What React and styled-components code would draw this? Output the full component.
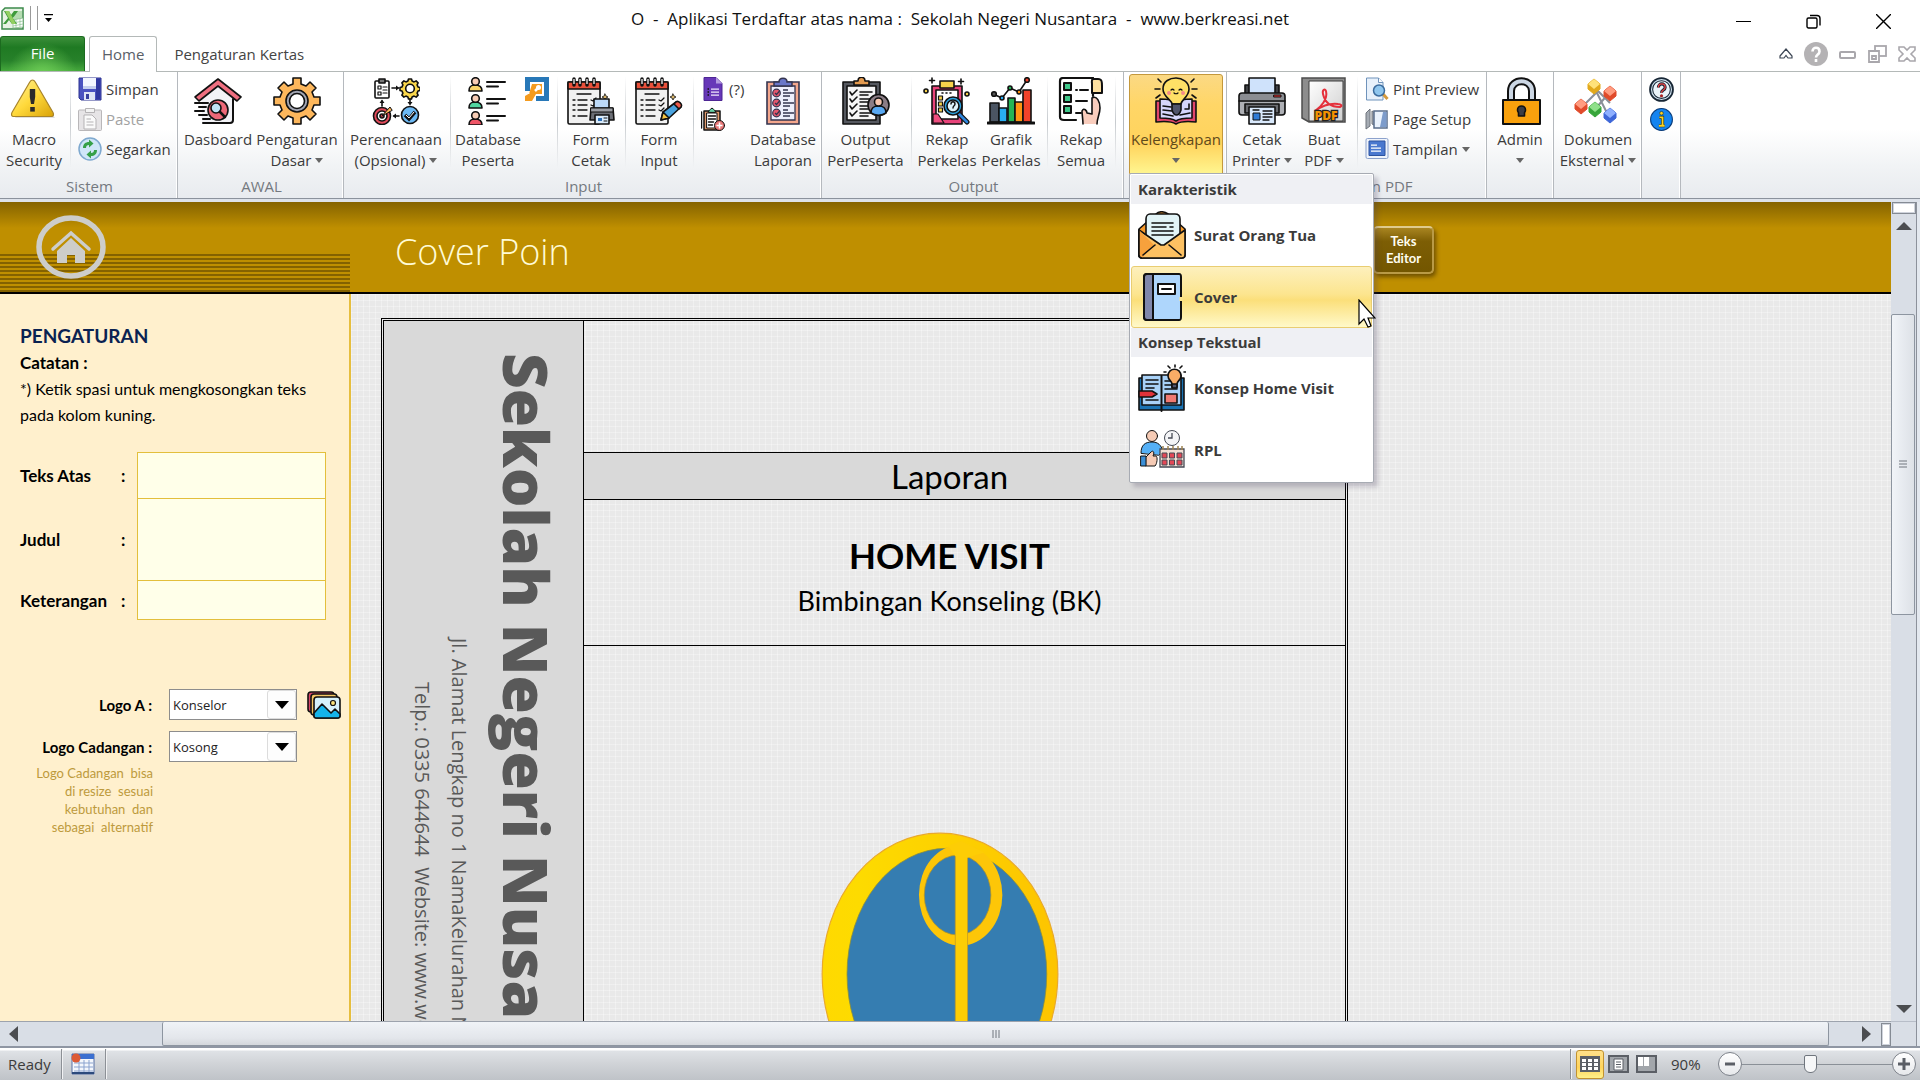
import styled, { createGlobalStyle, css } from 'styled-components'

const GlobalStyle = createGlobalStyle`
  * {
    box-sizing: border-box;
  }

  body {
    margin: 0;
    overflow: hidden;
    background: #fff;
    font-family: 'Open Sans', 'Noto Sans', sans-serif;
    font-size: 15px;
    color: #3b3b3b;
  }

  button, input, select, textarea {
    font: inherit;
    color: inherit;
  }

  svg {
    display: block;
    flex: none;
  }
`

const Window = styled.div`
  display: flex;
  flex-direction: column;
  height: 100vh;
  min-width: 1700px;
`

/* ---------- title bar ---------- */

const TitleBar = styled.header`
  display: grid;
  grid-template-columns: 1fr auto 1fr;
  align-items: center;
  height: 36px;
`

const QuickAccess = styled.div`
  display: flex;
  align-items: center;
  gap: 6px;
  height: 30px;
  padding-left: 1px;
`

const QuickLine = styled.span`
  width: 1px;
  height: 24px;
  background: #9a9a9a;
`

const Title = styled.h1`
  margin: 0;
  font-size: 17px;
  font-weight: 400;
  color: #111;
  white-space: pre;
`

const WindowButtons = styled.div`
  display: flex;
  justify-content: flex-end;
  height: 36px;
  padding-right: 2px;
`

const PlainButton = styled.button`
  display: flex;
  align-items: center;
  justify-content: center;
  padding: 0;
  border: 0;
  background: none;
`

const WindowButton = styled(PlainButton)`
  width: 70px;
  padding-top: 6px;
`

/* ---------- tabs ---------- */

const TabBar = styled.nav`
  display: flex;
  align-items: flex-end;
  height: 36px;
  border-bottom: 1px solid #b4b9b8;
`

const FileTab = styled.button`
  width: 85px;
  height: 35px;
  padding: 0 0 2px;
  border: 1px solid #1c6b1f;
  border-bottom: 0;
  border-radius: 3px 3px 0 0;
  color: #fff;
  background: radial-gradient(ellipse at 50% 115%, #6fce57 0%, rgba(75, 170, 60, 0) 60%),
    linear-gradient(#3c8f3a, #1f7a23 30%, #27812a 70%, #45a83c);
`

const Tab = styled.button`
  height: 36px;
  margin: 0 0 -1px 4px;
  padding: 0 12px 2px;
  border: 1px solid ${(p) => (p.$active ? '#b4b9b8' : 'transparent')};
  border-bottom: 0;
  border-radius: 3px 3px 0 0;
  color: ${(p) => (p.$active ? '#5a6068' : '#444')};
  background: ${(p) => (p.$active ? '#fff' : 'none')};
`

const TabTools = styled.div`
  display: flex;
  align-items: center;
  gap: 11px;
  height: 35px;
  margin-left: auto;
  padding-right: 4px;
`

/* ---------- ribbon ---------- */

const Ribbon = styled.div`
  display: flex;
  height: 127px;
  border-bottom: 1px solid #8b929c;
  background: linear-gradient(#fff 0%, #fff 45%, #f1f3f5 75%, #e8ebef 100%);
`

const Group = styled.section`
  display: flex;
  flex-direction: column;
  width: ${(p) => p.$w}px;
  padding-left: 2px;
  border-right: 1px solid #b5b9be;
  box-shadow: inset -1px 0 #fff;
`

const GroupBody = styled.div`
  display: flex;
  height: 104px;
  padding-left: ${(p) => p.$pad || 0}px;
`

const GroupName = styled.h2`
  margin: 0;
  font-size: 15px;
  line-height: 21px;
  font-weight: 400;
  text-align: center;
  color: #74797f;
`

const BigButton = styled.button`
  display: flex;
  flex-direction: column;
  align-items: center;
  width: ${(p) => p.$w}px;
  height: 100px;
  margin-top: 2px;
  padding: 2px 0 0;
  border: 1px solid transparent;
  border-radius: 3px;
  background: none;
  line-height: 21px;
  white-space: nowrap;

  ${(p) =>
    p.$open &&
    css`
      border-color: #c4983c;
      border-radius: 3px 3px 0 0;
      color: #5f4a1b;
      background: linear-gradient(#fbd984 0%, #ffd667 30%, #ffd35c 70%, #fff58f 100%);
    `}
`

const BigLabel = styled.span`
  display: flex;
  align-items: center;
  gap: 4px;
  height: 21px;

  &:first-of-type {
    margin-top: 4px;
  }
`

const Divider = styled.span`
  width: 8px;
  height: 92px;
  margin-top: 4px;
  background: linear-gradient(rgba(190, 195, 200, 0), #c6cace 50%, rgba(190, 195, 200, 0)) center / 1px 100% no-repeat;
`

const SmallColumn = styled.div`
  display: flex;
  flex-direction: column;
  padding: 2px 0 0 ${(p) => p.$pad}px;
  width: ${(p) => (p.$w ? p.$w + 'px' : 'auto')};
`

const SmallButton = styled.button`
  display: flex;
  align-items: center;
  gap: 4px;
  height: 30px;
  padding: 0;
  border: 0;
  background: none;
  white-space: nowrap;
  color: ${(p) => (p.disabled ? '#a2a2a2' : 'inherit')};
`

const MenuAnchor = styled.div`
  position: relative;
`

const Menu = styled.div`
  position: absolute;
  z-index: 5;
  top: 101px;
  left: 0;
  width: 245px;
  padding: 1px;
  border: 1px solid #a7abb3;
  border-radius: 2px;
  background: #fff;
  box-shadow: 4px 4px 4px rgba(70, 60, 90, 0.25);
`

const MenuHeading = styled.h3`
  margin: 0;
  padding-left: 7px;
  font-size: 15px;
  line-height: 29px;
  font-weight: 700;
  color: #3b3b3b;
  background: #eff0f4;
`

const MenuItem = styled.button`
  display: flex;
  align-items: center;
  gap: 8px;
  width: 100%;
  height: 62px;
  padding: 0 6px;
  border: 1px solid ${(p) => (p.$hover ? '#e9cd72' : 'transparent')};
  border-radius: 3px;
  font-weight: 700;
  text-align: left;
  background: ${(p) =>
    p.$hover ? 'linear-gradient(#fdf0bd 0%, #fce58f 45%, #fbdf7a 55%, #fff9c9 100%)' : 'none'};
`

const Pointer = styled.svg`
  position: absolute;
  left: 228px;
  top: 125px;
`

/* ---------- workspace ---------- */

const Workspace = styled.main`
  display: flex;
  flex: 1;
  min-height: 0;
  padding-top: 3px;
  background: #dde2ea;
`

const Pane = styled.div`
  display: flex;
  flex: 1;
  flex-direction: column;
  min-width: 0;
`

const Banner = styled.div`
  display: flex;
  height: 92px;
  border-bottom: 2px solid #000;
  background: linear-gradient(#846300, #bf8f00 26px);
`

const BannerSide = styled.div`
  width: 350px;
  padding: 13px 0 0 36px;
  background: repeating-linear-gradient(#846200 0 2px, transparent 2px 4px) 0 100% / 100% 38px no-repeat;
`

const BannerTitle = styled.h2`
  flex: 1;
  margin: 0;
  padding: 25px 0 0 45px;
  font-size: 36px;
  line-height: 50px;
  font-weight: 300;
  color: #fffbd6;
`

const TextEditorButton = styled.button`
  width: 61px;
  height: 48px;
  margin: 24px 457px 0 0;
  padding: 0;
  border: 2px solid #b99a46;
  border-top-color: #dfcb8e;
  border-radius: 5px;
  font: 700 13px/17px Lato, sans-serif;
  color: #fffdf0;
  background: linear-gradient(#a98521, #7d5e05 30%, #735600);
  box-shadow: 2px 3px 4px rgba(60, 40, 0, 0.6);
`

const Body = styled.div`
  display: flex;
  flex: 1;
  min-height: 0;
`

const Sidebar = styled.aside`
  width: 351px;
  padding: 27px 0 0 20px;
  border-right: 2px solid #e6be3e;
  font-family: Lato, 'Open Sans', sans-serif;
  font-size: 16px;
  color: #000;
  background: #fff0cd;
`

const SideTitle = styled.h2`
  margin: 0;
  font-size: 19px;
  line-height: 29px;
  color: #0a2252;
`

const Note = styled.p`
  margin: 0;
  line-height: 26px;

  b {
    font-size: 17px;
  }
`

const Fields = styled.form`
  display: grid;
  grid-template-columns: 101px 16px 189px;
  grid-template-rows: 47px 81px 40px;
  align-items: center;
  margin-top: 24px;
  font-size: 17px;
  font-weight: 700;
`

const fieldBox = css`
  display: block;
  width: 100%;
  padding: 4px 6px;
  border: 1px solid #e3bf3c;
  border-radius: 0;
  outline: 0;
  resize: none;
  background: #ffffe9;
`

const FieldInput = styled.input`
  ${fieldBox}
  height: 100%;
`

const FieldArea = styled.textarea`
  ${fieldBox}
  height: calc(100% + 2px);
`

const LogoForm = styled.div`
  display: grid;
  grid-template-columns: 139px 128px 34px;
  grid-auto-rows: 31px;
  align-items: center;
  column-gap: 10px;
  row-gap: 11px;
  margin-top: 69px;
`

const LogoLabel = styled.label`
  padding-right: 7px;
  font-size: 15px;
  font-weight: 700;
  text-align: right;
`

const SelectBox = styled.div`
  position: relative;
  height: 31px;
`

const Select = styled.select`
  width: 100%;
  height: 100%;
  padding: 0 0 0 3px;
  border: 1px solid #8d8d8d;
  border-radius: 0;
  font-family: 'Open Sans', sans-serif;
  font-size: 13px;
  color: #222;
  appearance: none;
  background: #fff;
`

const SelectArrow = styled.span`
  position: absolute;
  top: 1px;
  right: 1px;
  bottom: 1px;
  display: flex;
  align-items: center;
  justify-content: center;
  width: 29px;
  border: 1px solid #dcdcdc;
  border-radius: 3px;
  background: #fdfdfd;
  pointer-events: none;
`

const LogoNote = styled.p`
  margin: 2px 0 0;
  width: 133px;
  font-size: 13px;
  line-height: 18px;
  text-align: right;
  white-space: pre;
  color: #bd9a3c;
`

const Canvas = styled.div`
  flex: 1;
  min-width: 0;
  padding: 24px 0 0 30px;
  overflow: hidden;
  background-color: #e9e9e9;
  background-image: repeating-linear-gradient(90deg, rgba(255, 255, 255, 0.3) 0 1px, transparent 1px 6px),
    repeating-linear-gradient(rgba(255, 255, 255, 0.3) 0 1px, transparent 1px 6px);
`

const Sheet = styled.article`
  display: grid;
  grid-template-columns: 200px 1fr;
  width: 967px;
  height: 100%;
  border: 3px double #000;
  border-bottom: 0;
  color: #000;
`

const Spine = styled.div`
  display: flex;
  flex-direction: row-reverse;
  min-height: 0;
  overflow: hidden;
  padding-right: 14px;
  border-right: 1px solid #000;
  color: #595959;
  background: #d9d9d9;
`

const SchoolName = styled.p`
  margin: 0 0 0 7px;
  padding-top: 32px;
  font-size: 62px;
  line-height: 84px;
  font-weight: 800;
  writing-mode: vertical-rl;
  white-space: nowrap;
`

const SchoolLine = styled.p`
  margin: 0;
  padding-top: ${(p) => p.$start}px;
  font-size: 20px;
  line-height: 37px;
  writing-mode: vertical-rl;
  white-space: pre;
`

const Cover = styled.div`
  display: grid;
  grid-template-rows: 131px 48px 146px 1fr;
  min-height: 0;
  font-family: Lato, 'Open Sans', sans-serif;
  text-align: center;
`

const CoverKind = styled.p`
  margin: 0;
  padding-right: 30px;
  border: 1px solid #000;
  border-width: 1px 0;
  font-size: 33px;
  line-height: 46px;
  background: #d9d9d9;
`

const CoverTitle = styled.div`
  padding: 30px 30px 0 0;
  border-bottom: 1px solid #000;

  h2 {
    margin: 0;
    font-size: 35px;
    line-height: 50px;
  }

  p {
    margin: 0;
    font-size: 27px;
    line-height: 42px;
  }
`

const CoverLogo = styled.div`
  display: flex;
  justify-content: center;
  min-height: 0;
  overflow: hidden;
  padding: 186px 50px 0 0;
`

/* ---------- scroll bars ---------- */

const VScroll = styled.div`
  display: flex;
  flex-direction: column;
  align-items: center;
  width: 26px;
  border-right: 1px solid #8c919b;
  background: #d9dee6;
`

const SplitBox = styled.span`
  width: ${(p) => p.$w}px;
  height: ${(p) => p.$h}px;
  border: 1px solid #858b94;
  background: #fff;
  box-shadow: inset 0 0 0 1px #cfd3dc;
`

const ArrowButton = styled(PlainButton)`
  width: ${(p) => p.$w}px;
  height: ${(p) => p.$h}px;
`

const VTrack = styled.div`
  flex: 1;
  width: 100%;
  padding-top: 76px;
`

const VThumb = styled.div`
  display: flex;
  align-items: center;
  justify-content: center;
  width: 24px;
  height: 44%;
  border: 1px solid #8d95a0;
  border-radius: 2px;
  background: linear-gradient(90deg, #f1f4f8, #dde1e7);
`

const Corner = styled.span`
  width: 100%;
  height: 25px;
  border-top: 1px solid #b7bdc8;
`

const HScroll = styled.div`
  display: flex;
  align-items: center;
  height: 25px;
  border-top: 1px solid #9da3ad;
  background: #d9dee6;
`

const HTrack = styled.div`
  flex: 1;
  height: 100%;
  padding: 0 22px 0 136px;
`

const HThumb = styled.div`
  display: flex;
  align-items: center;
  justify-content: center;
  height: 100%;
  border: 1px solid #8d95a0;
  border-top: 0;
  border-radius: 2px;
  background: linear-gradient(#f0f3f7, #e3e6eb 70%, #d4d7dc);
`

const Frame = styled.div`
  width: 3px;
  background: #e3e8ef;
`

/* ---------- status bar ---------- */

const StatusBar = styled.footer`
  display: flex;
  align-items: center;
  height: 34px;
  padding-right: 4px;
  border-top: 2px solid #8f96a3;
  background: linear-gradient(#fff 0 2px, #dfe2e6 3px, #d0d3d7 50%, #bfc3c8);
`

const StatusText = styled.span`
  width: 61px;
  padding-left: 8px;
`

const ZoomValue = styled.span`
  width: 58px;
  padding-left: 11px;
`

const StatusLine = styled.span`
  width: 2px;
  height: 30px;
  border-left: 1px solid #8c9096;
  background: #f1f2f4;
`

const Views = styled.div`
  display: flex;
  padding-left: 4px;
`

const ViewButton = styled(PlainButton)`
  width: 28px;
  height: 29px;
  border: 1px solid ${(p) => (p.$active ? '#c2922f' : 'transparent')};
  border-radius: 3px;
  background: ${(p) => (p.$active ? 'linear-gradient(#ffe08a, #ffd45c 60%, #fff08a)' : 'none')};
`

const Spacer = styled.span`
  flex: 1;
`

const RoundButton = styled(PlainButton)`
  width: 24px;
  height: 24px;
  border: 1px solid #7d828a;
  border-radius: 50%;
  background: linear-gradient(#fff, #e6e8eb);
`

const ZoomSlider = styled.input`
  width: 150px;
  height: 24px;
  margin: 0;
  appearance: none;
  background: linear-gradient(#8a9097, #8a9097) center / 100% 1px no-repeat;

  &::-webkit-slider-thumb {
    appearance: none;
    width: 13px;
    height: 18px;
    border: 1px solid #6f757d;
    border-radius: 2px 2px 6px 6px;
    background: #f6f7f8;
  }
`

/* ---------- icons ---------- */

const Icon = ({ size = 48, children, ...rest }) => (
  <svg width={size} height={size} viewBox="0 0 48 48" aria-hidden="true" {...rest}>
    {children}
  </svg>
)

const ink = { stroke: '#111', strokeWidth: 1.6, strokeLinejoin: 'round', strokeLinecap: 'round' }

const Caret = () => (
  <svg width="8" height="5" viewBox="0 0 8 5" aria-hidden="true">
    <path d="M0 0h8L4 5z" fill="#666" />
  </svg>
)

const Triangle = ({ dir }) => {
  const shapes = {
    up: [16, 8, 'M0 8h16L8 0z'],
    down: [16, 8, 'M0 0h16L8 8z'],
    left: [9, 16, 'M9 0v16L0 8z'],
    right: [9, 16, 'M0 0v16l9-8z'],
  }
  const [w, h, d] = shapes[dir]
  return (
    <svg width={w} height={h} viewBox={`0 0 ${w} ${h}`} aria-hidden="true">
      <path d={d} fill="#4b4d50" />
    </svg>
  )
}

const ExcelIcon = () => (
  <svg width="23" height="23" viewBox="0 0 23 23" aria-hidden="true">
    <path d="M4 1h18v21H1V4z" fill="#e7f3e4" stroke="#3c8b4b" strokeWidth="1.5" />
    <path d="M13 4h8v14h-8z" fill="#b5dcb1" />
    <path d="M12 13l10-2v9l-10 1z" fill="#fff" stroke="#7cb583" strokeWidth=".7" />
    <path d="M12 16l10-2M12 19l10-2M15 13v8M19 12v8" stroke="#8fc295" strokeWidth=".7" />
    <path d="M3 4h5l2 4 3-4h4l-5 7 4 6h-5l-3-4-3 4H2l5-6z" fill="#3f9b3c" />
    <path d="M4 4h4l7 13h-4z" fill="#93cf62" />
  </svg>
)

const WarningIcon = () => (
  <Icon>
    <defs>
      <linearGradient id="warn" x1="0" y1="0" x2="1" y2="1">
        <stop offset="0" stopColor="#fff3a0" />
        <stop offset=".5" stopColor="#ffd93b" />
        <stop offset="1" stopColor="#d9a208" />
      </linearGradient>
    </defs>
    <g transform="translate(0 1)">
      <path d="M5 40L24.500 6 45 40z" fill="#000" opacity=".12" />
      <path d="M22.500 2c1.500 0 2 .8 2.700 2L43 34.500c1 2 .5 4-1.500 4H3.500c-2 0-2.500-2-1.500-4L19.800 4c.7-1.200 1.200-2 2.700-2z" fill="url(#warn)" stroke="#a8842a" strokeWidth="1.200" />
      <path d="M19.800 11h5.400v8l-1.200 7h-3l-1.200-7z" fill="#2b2b2b" />
      <rect x="20.200" y="29" width="4.600" height="4.600" fill="#2b2b2b" />
    </g>
  </Icon>
)

const SaveIcon = () => (
  <Icon size={24}>
    <path d="M2 2h44v44H6l-4-4z" fill="#4a53c0" stroke="#2c3390" strokeWidth="2" />
    <path d="M36 4h8v40h-8z" fill="#3038a0" />
    <path d="M10 2h26v22H10z" fill="#f3f6ff" />
    <path d="M10 18h26v6H10z" fill="#c5cfee" />
    <path d="M12 30h22v16H12z" fill="#dfe5f5" />
    <path d="M16 34h6v10h-6z" fill="#37409f" />
  </Icon>
)

const PasteIcon = () => (
  <Icon size={24}>
    <rect x="1" y="6" width="46" height="41" rx="2" fill="#e6e4e6" stroke="#b9b7b9" strokeWidth="2" />
    <path d="M15 3h18v8H15z" fill="#f3f3f3" stroke="#b5b3b5" strokeWidth="2" />
    <path d="M12 16h16l8 8v20H12z" fill="#fafafa" stroke="#b5b3b5" strokeWidth="2" />
    <path d="M17 24h9M17 30h14M17 36h14" stroke="#b5b3b5" strokeWidth="2" />
  </Icon>
)

const RefreshIcon = () => (
  <Icon size={24}>
    <circle cx="24" cy="24" r="22" fill="#cfe6f8" stroke="#7fa9cf" strokeWidth="3" />
    <path d="M10 22c0-8 5-12 12-12V5l9 8-9 8v-5c-4 0-6 2-6 6z" fill="#35a047" />
    <path d="M38 26c0 8-5 12-12 12v5l-9-8 9-8v5c4 0 6-2 6-6z" fill="#35a047" />
  </Icon>
)

const DashboardIcon = () => (
  <Icon>
    <path d="M8 20v26h31V20L24 6z" fill="#f3f3f7" />
    <path d="M39 22v21c0 2-1 3-3 3H9" fill="none" {...ink} strokeWidth="2" />
    <path d="M24 2l23 18-4 4L24 9 5 24l-4-4z" fill="#ef6f80" {...ink} />
    <path d="M1 26h13M5 30h7M1 34h9M5 38h8M9 42h7" {...ink} strokeWidth="2" />
    <circle cx="24" cy="33" r="10" fill="#ee6878" {...ink} />
    <circle cx="22" cy="31" r="5" fill="#bfe3f5" {...ink} />
    <path d="M26 35l5 5" {...ink} strokeWidth="2.500" />
  </Icon>
)

const GearIcon = () => (
  <Icon>
    <path
      d="M20 1h8v6l5 2 4-4 6 6-4 4 2 5h6v8h-6l-2 5 4 4-6 6-4-4-5 2v6h-8v-6l-5-2-4 4-6-6 4-4-2-5H1v-8h6l2-5-4-4 6-6 4 4 5-2z"
      fill="#fdb75c"
      {...ink}
    />
    <circle cx="24" cy="24" r="11" fill="#a3a6b3" {...ink} />
    <circle cx="24" cy="24" r="7.500" fill="#fff" {...ink} />
  </Icon>
)

const PlanIcon = () => (
  <Icon>
    <rect x="3" y="4" width="14" height="17" rx="1" fill="#fff" {...ink} />
    <path d="M7 2h6v4H7z" fill="#777" {...ink} />
    <path d="M6 9h3v3H6zM6 15h3v3H6zM11 10h4M11 13h4M11 16h4" fill="none" {...ink} strokeWidth="1.200" />
    <path
      d="M36.500 2h3l.6 2 2 .9 2-1 2 2-1 2 .9 2 2 .6v3l-2 .6-.9 2 1 2-2 2-2-1-2 .9-.6 2h-3l-.6-2-2-.9-2 1-2-2 1-2-.9-2-2-.6v-3l2-.6.9-2-1-2 2-2 2 1 2-.9z"
      fill="#fbd84c"
      {...ink}
    />
    <circle cx="38" cy="11.500" r="4.300" fill="#fff" {...ink} />
    <path d="M20 11h6M38 22v4M27 39h-5M10 29v-5" {...ink} />
    <path d="M24 8.500v5l3.500-2.500zM35.500 25h5L38 28.500zM24 36.500v5L20.500 39zM7.500 26h5L10 22.500z" fill="#111" />
    <circle cx="10" cy="39" r="8.500" fill="#e24b5b" {...ink} />
    <circle cx="10" cy="39" r="5" fill="#fff" {...ink} />
    <circle cx="10" cy="39" r="2" fill="#e24b5b" {...ink} />
    <path d="M10 39l8-9 2 3z" fill="#fdb75c" {...ink} strokeWidth="1" />
    <circle cx="38" cy="38" r="8.500" fill="#6cb9f4" {...ink} />
    <path d="M33 38l4 4 6-7" fill="none" stroke="#111" strokeWidth="3.500" />
    <path d="M34 38l3 3 5-6" fill="none" stroke="#fff" strokeWidth="1" />
  </Icon>
)

const PeopleIcon = () => (
  <Icon>
    {['#fbd66b', '#52d6a0', '#ef5566'].map((color, i) => (
      <g key={color} transform={`translate(0 ${i * 17})`}>
        <path d="M5 14c0-5 2-6 6-6s7 1 7 6z" fill={color} {...ink} />
        <circle cx="11.500" cy="4.500" r="3.800" fill="#f8cdb5" {...ink} />
        <path d="M23 5h18M23 9.500h11" {...ink} strokeWidth="2" />
      </g>
    ))}
  </Icon>
)

const VisioIcon = () => (
  <Icon size={24}>
    <path d="M0 0h48v48H22V38h16V10H10v18H0z" fill="#2878b8" />
    <path d="M14 14h20v20H22l-8 14H0V34h8z" fill="#f49b1f" />
    <path d="M20 28l6-6" stroke="#fff" strokeWidth="5" />
    <circle cx="27" cy="21" r="5" fill="#fff" />
    <path d="M0 32h10L0 38z" fill="#fff" />
  </Icon>
)

const Notepad = () => (
  <>
    <rect x="1" y="5" width="32" height="42" rx="1.500" fill="#f1f1f1" {...ink} />
    <path d="M1 5h32v7H1z" fill="#e8503a" {...ink} />
    <path d="M7 2v6M13 2v6M20 2v6M27 2v6" {...ink} strokeWidth="3.500" />
    <path d="M7 2v5M13 2v5M20 2v5M27 2v5" stroke="#f4f4f4" strokeWidth="1.300" />
    <path d="M10 17h14M6 23h2M11 23h9M6 28h2M11 28h9M6 33h2M11 33h9M6 39h2M11 39h9" {...ink} strokeWidth="1.300" />
    <path d="M24 23l2 1 3-3M24 28l2 1 3-3M24 33l2 1 3-3" fill="none" {...ink} strokeWidth="1.200" />
    <path d="M38 17l1 2 2 1-2 1-1 2-1-2-2-1 2-1z" fill="#d9b56a" {...ink} strokeWidth=".8" />
  </>
)

const FormPrintIcon = () => (
  <Icon>
    <Notepad />
    <path d="M27 22h15v10H27z" fill="#bcd9f7" {...ink} />
    <path d="M24 31h22l1 12H23z" fill="#6b6e75" {...ink} />
    <path d="M24 31h22v4H24z" fill="#9b9ea4" {...ink} strokeWidth="1" />
    <path d="M28 38h14v9H28z" fill="#d9ebfb" {...ink} />
    <path d="M31 41h4v3h-4z" fill="#2c6fb7" />
    <path d="M37 41h3M37 44h3" {...ink} strokeWidth="1" />
  </Icon>
)

const FormEditIcon = () => (
  <Icon>
    <Notepad />
    <path d="M26 43l2-8 13-10 5 5-12 11z" fill="#4aa3df" {...ink} />
    <path d="M41 25c2-2 7 2 5 5l-2 2-5-5z" fill="#ee5a4a" {...ink} />
    <path d="M26 43l2-8 6 6z" fill="#f5c542" {...ink} />
  </Icon>
)

const GoogleFormIcon = () => (
  <Icon size={24}>
    <path d="M6 1h24l12 12v34H6z" fill="#6737b8" stroke="#4d2693" strokeWidth="2" />
    <path d="M30 1l12 12H30z" fill="#b49ae0" />
    <path d="M20 24h16M20 30h16M20 36h16" stroke="#efe8fb" strokeWidth="2.500" />
    <path d="M13 24h3M13 30h3M13 36h3" stroke="#111" strokeWidth="3" />
  </Icon>
)

const ClipAddIcon = () => (
  <Icon size={24}>
    <path d="M1 10v32M6 8h32v38H6z" fill="#e09a6d" {...ink} strokeWidth="3" />
    <path d="M12 12h20v30H12z" fill="#fff" {...ink} strokeWidth="2" />
    <path d="M15 10c0-4 3-4 7-8 4 4 7 4 7 8z" fill="#66d1a5" {...ink} strokeWidth="2" />
    <path d="M15 18h14M15 24h14M15 30h10M15 36h8" {...ink} strokeWidth="3" />
    <circle cx="37" cy="37" r="10" fill="#e97777" {...ink} strokeWidth="2" />
    <path d="M37 31v12M31 37h12" stroke="#fff" strokeWidth="3" />
  </Icon>
)

const ReportIcon = () => (
  <Icon>
    <path d="M8 5h32v42H8z" fill="#f4a78d" stroke="#35354f" strokeWidth="1.600" />
    <path d="M12 9h24v34H12z" fill="#eeeefc" stroke="#35354f" strokeWidth="1.300" />
    <path d="M15 9V5h5c0-5 8-5 8 0h5v4z" fill="#6a76c8" stroke="#35354f" strokeWidth="1.500" />
    {[16, 26, 36].map((y) => (
      <g key={y}>
        <circle cx="17.500" cy={y} r="3.800" fill="#e5566d" stroke="#35354f" strokeWidth="1.200" />
        <path d={`M16 ${y}l1.500 1.500 3.500-4`} fill="none" stroke="#35354f" strokeWidth="1.200" />
        <path d={`M24 ${y - 3}h5M24 ${y}h11M24 ${y + 3}h7`} stroke="#35354f" strokeWidth="1.500" />
      </g>
    ))}
  </Icon>
)

const OutputIcon = () => (
  <Icon>
    <path d="M1 5h37v42H1z" fill="#55585f" {...ink} />
    <path d="M5 9h29v34H5z" fill="#f5f5f5" {...ink} />
    <path d="M12 8V4h4c0-5 7-5 7 0h4v4z" fill="#e39a4f" {...ink} />
    {[15, 22, 29, 36].map((y) => (
      <path key={y} d={`M8 ${y}l2 3 5-5M18 ${y}h12M18 ${y + 3}h8`} fill="none" {...ink} />
    ))}
    <circle cx="36.500" cy="28" r="10.500" fill="#8b7d86" {...ink} />
    <path d="M29 36c0-6 3-7 7.500-7s7.500 1 7.500 7c-4 3-11 3-15 0z" fill="#58a8f2" {...ink} />
    <circle cx="36.500" cy="25" r="4" fill="#f7c7b0" {...ink} />
  </Icon>
)

const RecapClassIcon = () => (
  <Icon>
    <path d="M9 9h30v38H9z" fill="#e8437a" {...ink} />
    <path d="M13 13h22v29H17l-4-4z" fill="#fff" {...ink} />
    <path d="M17 4h14v7H17z" fill="#f8d34b" {...ink} />
    <path d="M9 1v5M6.500 3.500h5M38 2v5M35.500 4.500h5" {...ink} />
    <circle cx="3" cy="14" r="2" fill="#f8d34b" {...ink} />
    <circle cx="44" cy="17" r="2" fill="#f8d34b" {...ink} />
    <path d="M19 16h1M23 16h1M27 16h1" {...ink} />
    <path d="M15.500 19h4v4h-4zM15.500 25h4v4h-4zM15.500 31h4v4h-4z" fill="#f8d34b" {...ink} strokeWidth="1.200" />
    <path d="M10 37h5l6 9H10z" fill="#ee4d7f" {...ink} strokeWidth="1.200" />
    <path d="M36 37l8 8" stroke="#111" strokeWidth="5" strokeLinecap="round" />
    <path d="M36 37l8 8" stroke="#2f86dd" strokeWidth="2.500" strokeLinecap="round" />
    <circle cx="30" cy="29" r="9" fill="#2da2df" {...ink} />
    <circle cx="30" cy="29" r="6" fill="#dff4fb" {...ink} />
    <path d="M28 27c0-3 4-3 4 0 0 2-2 1.500-2 4" fill="none" {...ink} strokeWidth="1.400" />
  </Icon>
)

const ChartIcon = () => (
  <Icon>
    <path d="M3 26h9v19H3z" fill="#4b5563" {...ink} />
    <path d="M12 31h8v14h-8z" fill="#29aef3" {...ink} />
    <path d="M21 21h7v24h-7z" fill="#22b455" {...ink} />
    <path d="M28 25h8v20h-8z" fill="#ff9413" {...ink} />
    <path d="M36 13h8v32h-8z" fill="#f1422a" {...ink} />
    <path d="M1 46h46" {...ink} strokeWidth="3" />
    <path d="M6 17l9 4 8-10 9 4 8-12" fill="none" {...ink} />
    <circle cx="7" cy="17" r="2.300" fill="#555" {...ink} />
    <circle cx="15" cy="21" r="2" fill="#29aef3" {...ink} />
    <circle cx="23" cy="11" r="2" fill="#22b455" {...ink} />
    <circle cx="32" cy="15" r="2" fill="#ff9413" {...ink} />
    <circle cx="40" cy="3" r="2.300" fill="#f1422a" {...ink} />
  </Icon>
)

const RecapAllIcon = () => (
  <Icon>
    <path d="M36 1H6C4 1 3 2 3 4v36c0 3 2 3 4 3h12M36 3v16" fill="none" {...ink} strokeWidth="2.200" />
    <path d="M36 2h5c4 0 4 3 4 7v7H35V7c0-3-1-4 1-5z" fill="#fde0a0" {...ink} strokeWidth="2" />
    <path d="M26 47c0-4-1-10-1-13 2-4 5 0 5 2l5 1V21c5-3 8 4 8 10s-3 10-3 16z" fill="#f9cdbd" />
    <path d="M26 47c0-4-1-10-1-13 2-4 5 0 5 2l5 1V21c5-3 8 4 8 10s-3 10-3 16" fill="none" {...ink} />
    <path d="M7 6h7v7H7zM7 18h7v7H7zM7 29h7v7H7z" fill="#3fc88a" {...ink} strokeWidth="2" />
    <path d="M19 13h1M23 13h8M19 24h11M19 36h5" {...ink} strokeWidth="2" />
  </Icon>
)

const IdeaBookIcon = () => (
  <Icon>
    <path d="M4 24h40v21c-8-1-15-1-20 2-5-3-12-3-20-2z" fill="#e2456b" {...ink} />
    <path d="M8 22c6 0 12 0 16 3 4-3 10-3 16-3v19c-6 0-12 0-16 3-4-3-10-3-16-3z" fill="#d6d6fb" {...ink} />
    <path d="M11 29l8 1M11 33l9 1M11 37l10 2M28 38l10-2M33 32h4v-5" fill="none" {...ink} />
    <path d="M20 27c0-4-9-7-9-15C11 4 18 1 24 1s13 4 13 11c0 8-8 11-8 15z" fill="#ffe066" {...ink} />
    <path d="M20 27h9v6c-1 3-3 5-4.500 5S21 36 20 33z" fill="#50556b" {...ink} />
    <path d="M19 13c1-1 2-1 3 0M27 13c1-1 2-1 3 0M22 16c1 1 3 1 4 0" fill="none" {...ink} strokeWidth="1.200" />
    <circle cx="17" cy="16" r="2" fill="#f58b8b" />
    <circle cx="31" cy="16" r="2" fill="#f58b8b" />
    <path d="M3 12h5M6 2l3 3M4 21l4-3M45 12h-5M42 2l-3 3M44 21l-4-3" {...ink} />
  </Icon>
)

const PrinterIcon = () => (
  <Icon>
    <path d="M7 8h34v10H7z" fill="#3f4145" {...ink} />
    <path d="M11 1h26v17H11z" fill="#cfe2fb" {...ink} />
    <path d="M4 16h40c2 0 3 1 3 3v16c0 2-1 3-3 3H4c-2 0-3-1-3-3V19c0-2 1-3 3-3z" fill="#8b8d92" {...ink} />
    <path d="M2 25h44v10c0 1-1 2-2 2H4c-1 0-2-1-2-2z" fill="#aeb0b5" />
    <path d="M1 24h46" {...ink} />
    <path d="M36 18h7v2h-7z" fill="#e33" {...ink} strokeWidth="1" />
    <path d="M7 27h34v9H7z" fill="#6a6c71" {...ink} />
    <path d="M11 30h26v17H11z" fill="#d9e9fc" {...ink} />
    <path d="M15 36h7v7h-7z" fill="#2f7bd6" stroke="#111" />
    <path d="M15 33h6M25 34h9M25 37h9M25 40h9M25 43h6" {...ink} strokeWidth="1.300" />
  </Icon>
)

const PdfIcon = () => (
  <Icon>
    <defs>
      <linearGradient id="pdf" x1="0" y1="0" x2="1" y2="1">
        <stop offset="0" stopColor="#fff" />
        <stop offset="1" stopColor="#cfcfcf" />
      </linearGradient>
    </defs>
    <path d="M2 1h43v44H9l-7-4z" fill="#8d8d8d" stroke="#4d4d4d" strokeWidth="1.500" />
    <path d="M9 4h34v40H9z" fill="url(#pdf)" stroke="#3c3c3c" />
    <path d="M15 34c6-4 13-12 11-20-1-3-4-1-3 3 2 9 8 13 17 13 3-1 1-3-2-3-8-1-16 2-23 7z" fill="none" stroke="#e5303b" strokeWidth="2" />
    <text x="26" y="43" textAnchor="middle" fontFamily="Open Sans, sans-serif" fontWeight="800" fontSize="12" fill="#f39200" stroke="#222" strokeWidth="2.500" paintOrder="stroke">
      PDF
    </text>
  </Icon>
)

const PreviewIcon = () => (
  <Icon size={24}>
    <path d="M3 2h24l9 9v35H3z" fill="#e8f1fb" stroke="#6f93bb" strokeWidth="2" />
    <path d="M27 2v9h9" fill="#fff" stroke="#6f93bb" strokeWidth="2" />
    <path d="M36 34l9 10" stroke="#d59a3c" strokeWidth="6" />
    <circle cx="28" cy="27" r="11" fill="#8fc6ee" stroke="#3c6c9e" strokeWidth="3" />
  </Icon>
)

const PageSetupIcon = () => (
  <Icon size={24}>
    <path d="M2 12l8-8v34l-8 6zM14 8l8 5v25l-8-4z" fill="#a5abb3" stroke="#6e747d" strokeWidth="2" />
    <path d="M18 8h26v34H18z" fill="#eaf2fc" stroke="#5b6f8c" strokeWidth="3" />
    <path d="M36 10h7v30H30z" fill="#7d9ccb" />
  </Icon>
)

const ViewIcon = () => (
  <Icon size={24}>
    <rect x="2" y="3" width="44" height="40" rx="3" fill="#f0f4fb" stroke="#8ca2cc" strokeWidth="2" />
    <path d="M8 8h32v29H8z" fill="#4a78cf" stroke="#2c53a0" strokeWidth="2" />
    <path d="M12 16h12M12 22h20M12 28h20" stroke="#fff" strokeWidth="2.500" />
  </Icon>
)

const LockIcon = () => (
  <Icon>
    <path d="M12 24V14c0-17 27-17 27 0v10h-6V14c0-9-15-9-15 0v10z" fill="#ccd7e4" {...ink} strokeWidth="2" />
    <path d="M7 23h37v24H7z" fill="#f9a10d" {...ink} strokeWidth="2" />
    <path d="M21.500 33a4 4 0 1 1 8 0c0 2-1 2-1 3v3h-6v-3c0-1-1-1-1-3z" fill="#3b3d45" {...ink} />
  </Icon>
)

const Gem = ({ x, y, a, b }) => (
  <g transform={`translate(${x} ${y})`}>
    <path d="M0-7l6 5v5l-6 5-6-5v-5z" fill={b} stroke={b} />
    <path d="M0-7l6 5-6 5-6-5z" fill={a} />
  </g>
)

const NetworkIcon = () => (
  <Icon>
    <path d="M20 10l16 32M10 28l14-14 12 12M22 31l14-16" stroke="#8a8f99" strokeWidth="2" fill="none" />
    <Gem x={20} y={9} a="#ffe27a" b="#e2a91c" />
    <Gem x={36} y={16} a="#ff9c80" b="#e04a2a" />
    <Gem x={7} y={29} a="#ff9c80" b="#e04a2a" />
    <Gem x={21} y={32} a="#8fe08a" b="#37a53a" />
    <Gem x={36} y={38} a="#8fb0ff" b="#3d66d8" />
  </Icon>
)

const HelpIcon = () => (
  <Icon size={25}>
    <circle cx="24" cy="24" r="22" fill="#cfe2ef" stroke="#172635" strokeWidth="3.500" />
    <circle cx="24" cy="24" r="17" fill="#eaf4fa" stroke="#172635" strokeWidth="2" />
    <path d="M18 20c0-9 13-9 13 0 0 5-7 5-7 10" fill="none" stroke="#172635" strokeWidth="6" />
    <path d="M18 20c0-9 13-9 13 0 0 5-7 5-7 10" fill="none" stroke="#e44" strokeWidth="2.500" />
    <circle cx="24" cy="36" r="3" fill="#a22" />
  </Icon>
)

const InfoIcon = () => (
  <Icon size={25}>
    <circle cx="24" cy="24" r="21" fill="#1484f0" stroke="#0c3c78" strokeWidth="2" />
    <path d="M20 20h6v16M19 36h11" fill="none" stroke="#133" strokeWidth="6" />
    <path d="M20 20h6v16M19 36h11" fill="none" stroke="#ffd21f" strokeWidth="3.500" />
    <circle cx="24" cy="12" r="3.500" fill="#ffd21f" stroke="#133" strokeWidth="1.200" />
  </Icon>
)

const LetterIcon = () => (
  <Icon>
    <path d="M1 18L18 3c3-3 8-3 12 0l17 15v26c0 2-1 3-3 3H4c-2 0-3-1-3-3z" fill="#f79a2b" {...ink} />
    <path d="M8 8c0-3 2-5 4-5h25c3 0 5 2 5 5v18L26 35h-3L8 25z" fill="#e2f4f7" {...ink} />
    <path d="M14 12h21M14 16h14M32 16h3M14 20h21M14 24h21" {...ink} />
    <path d="M1 19l22 15h3l21-15v25c0 2-1 3-3 3H4c-2 0-3-1-3-3z" fill="#fdc162" {...ink} />
    <path d="M1 19v25l3 3 12-13z" fill="#f7a13c" />
    <path d="M5 44l12-10M43 44L31 34M1 19v25c0 2 1 3 3 3" fill="none" {...ink} />
  </Icon>
)

const NotebookIcon = () => (
  <Icon>
    <path d="M6 4c0-2 1-3 3-3h32c2 0 2 1 2 3v40c0 2 0 3-2 3H9c-2 0-3-1-3-3z" fill="#aed6fc" {...ink} strokeWidth="2" />
    <path d="M6 4c0-2 1-3 3-3h6v46H9c-2 0-3-1-3-3z" fill="#8087ab" {...ink} strokeWidth="2" />
    <path d="M20 11h17v10H20z" fill="#fff" {...ink} strokeWidth="2" />
    <path d="M24 16h9" {...ink} strokeWidth="2" />
    <path d="M43 24v4" stroke="#fce58f" strokeWidth="3" />
  </Icon>
)

const ConceptIcon = () => (
  <Icon>
    <path d="M1 14h45v32H1z" fill="#1a72b2" {...ink} />
    <path d="M4 11h39v30H4z" fill="#a9d2f8" {...ink} />
    <path d="M23.500 12v35" {...ink} strokeWidth="2" />
    <path d="M8 16h12M8 20h12M8 24h8M8 36h12M27 17h6M27 21h7M27 25h12" {...ink} />
    <path d="M27 30h12v9H27z" fill="#f07a72" {...ink} />
    <path d="M1 27h13l5 3-5 3H1z" fill="#e0323a" {...ink} />
    <path d="M34 20c0-3-4-4-4-8 0-9 13-9 13 0 0 4-4 5-4 8v3h-5z" fill="#f9ac66" {...ink} />
    <path d="M34 20h5v4h-5z" fill="#50556b" {...ink} />
    <path d="M37 1v2M30 2l2 2M44 2l-2 2M26 8h2M46 8h2" {...ink} />
  </Icon>
)

const RplIcon = () => (
  <Icon>
    <path d="M3 27c0-8 4-11 11-11 6 0 9 3 11 9l-4 4z" fill="#55b0f6" {...ink} strokeWidth="1" />
    <circle cx="14" cy="10" r="5.500" fill="#f6cbb5" {...ink} strokeWidth="1" />
    <circle cx="34" cy="12" r="7.500" fill="#f4f5f7" stroke="#454a55" />
    <path d="M34 7v5h-4" fill="none" stroke="#454a55" strokeWidth="1.300" />
    <path d="M22 23h24v18H22z" fill="#f1ded4" stroke="#454a55" strokeWidth="1.300" />
    {[24, 31.5, 39].map((x) => (
      <path key={x} d={`M${x} 27h5v5h-5zM${x} 34h5v5h-5z`} fill="#e34756" stroke="#454a55" />
    ))}
    <path d="M25 20v4M30 20v4M35 20v4M40 20v4M44 20v4" stroke="#a08452" strokeWidth="1.500" />
    <path d="M8 31l5-5c2-2 4 0 2 4h3c2 1 1 8-1 10H8z" fill="#f6cbb5" {...ink} strokeWidth="1" />
    <path d="M3 30h5v10H3z" fill="#3c8fd6" {...ink} strokeWidth="1" />
  </Icon>
)

const PicturesIcon = () => (
  <svg width="34" height="28" viewBox="0 0 34 28" aria-hidden="true">
    <rect x="1" y="1" width="26" height="20" rx="3" fill="#d8456a" {...ink} />
    <rect x="4" y="3" width="26" height="21" rx="3" fill="#f6c665" {...ink} />
    <rect x="7" y="6" width="26" height="21" rx="3" fill="#d6f1fb" {...ink} />
    <path d="M7 22l8-9 9 9 4-4 5 5v2c0 1-1 2-2 2H9c-1 0-2-1-2-2z" fill="#15b4ea" {...ink} />
    <circle cx="26" cy="12" r="2.500" fill="#fde37c" {...ink} strokeWidth="1.200" />
  </svg>
)

const HomeLogo = () => (
  <svg width="70" height="64" viewBox="0 0 70 64" preserveAspectRatio="none" aria-hidden="true">
    <ellipse cx="35" cy="32" rx="32" ry="29" fill="none" stroke="#cdcdca" strokeWidth="5.500" />
    <path d="M17 34l18-16 18 16" fill="none" stroke="#cdcdca" strokeWidth="3.500" strokeLinecap="round" />
    <path d="M21 36l14-13 14 13v12H39v-8h-8v8H21z" fill="#cdcdca" />
  </svg>
)

const BkLogo = () => (
  <svg width="238" height="285" viewBox="108 1042 622 750" preserveAspectRatio="none" aria-label="Logo Bimbingan Konseling">
    <defs>
      <linearGradient id="gold">
        <stop offset="0" stopColor="#ffd900" />
        <stop offset=".15" stopColor="#fddb00" />
        <stop offset="1" stopColor="#fdc400" />
      </linearGradient>
    </defs>
    <ellipse cx="419" cy="1416" rx="308" ry="371" fill="url(#gold)" stroke="#e9a92b" strokeWidth="3" />
    <ellipse cx="437" cy="1416" rx="261" ry="331" fill="#357db1" stroke="#8a8c3c" strokeWidth="2" />
    <ellipse cx="473" cy="1208" rx="109" ry="133" fill="#fdc608" />
    <ellipse cx="465" cy="1208" rx="87" ry="105" fill="#357db1" stroke="#a9912f" strokeWidth="2" />
    <path d="M459 1080h32v712h-32z" fill="#fdcd05" stroke="#c39a25" strokeWidth="2" />
    <path d="M440 1078l35-12 60 30-44 14-32-4z" fill="#fdcd05" />
  </svg>
)

const Big = ({ icon, lines, w, caret, open }) => (
  <BigButton $w={w} $open={open} type="button">
    {icon}
    {lines.map((line, i) => (
      <BigLabel key={i}>
        {line}
        {caret && i === lines.length - 1 && <Caret />}
      </BigLabel>
    ))}
  </BigButton>
)

const KelengkapanMenu = () => (
  <Menu role="menu">
    <MenuHeading>Karakteristik</MenuHeading>
    <MenuItem role="menuitem">
      <LetterIcon />
      Surat Orang Tua
    </MenuItem>
    <MenuItem role="menuitem" $hover>
      <NotebookIcon />
      Cover
    </MenuItem>
    <MenuHeading>Konsep Tekstual</MenuHeading>
    <MenuItem role="menuitem">
      <ConceptIcon />
      Konsep Home Visit
    </MenuItem>
    <MenuItem role="menuitem">
      <RplIcon />
      RPL
    </MenuItem>
    <Pointer width="18" height="29" viewBox="0 0 18 29" aria-hidden="true">
      <path d="M1 1v24l5-5 4 8 3-1-3-8h7z" fill="#fff" stroke="#000" strokeWidth="1.200" />
    </Pointer>
  </Menu>
)

const RibbonBar = () => (
  <Ribbon>
    <Group $w={178}>
      <GroupBody>
        <Big w={64} icon={<WarningIcon />} lines={['Macro', 'Security']} />
        <Divider />
        <SmallColumn $pad={4}>
          <SmallButton><SaveIcon />Simpan</SmallButton>
          <SmallButton disabled><PasteIcon />Paste</SmallButton>
          <SmallButton><RefreshIcon />Segarkan</SmallButton>
        </SmallColumn>
      </GroupBody>
      <GroupName>Sistem</GroupName>
    </Group>

    <Group $w={166}>
      <GroupBody>
        <Big w={76} icon={<DashboardIcon />} lines={['Dasboard']} />
        <Big w={82} icon={<GearIcon />} lines={['Pengaturan', 'Dasar']} caret />
      </GroupBody>
      <GroupName>AWAL</GroupName>
    </Group>

    <Group $w={478}>
      <GroupBody>
        <Big w={100} icon={<PlanIcon />} lines={['Perencanaan', '(Opsional)']} caret />
        <Divider />
        <Big w={68} icon={<PeopleIcon />} lines={['Database', 'Peserta']} />
        <SmallColumn $pad={3} $w={31}>
          <SmallButton aria-label="Visio"><VisioIcon /></SmallButton>
        </SmallColumn>
        <Divider />
        <Big w={60} icon={<FormPrintIcon />} lines={['Form', 'Cetak']} />
        <Divider />
        <Big w={60} icon={<FormEditIcon />} lines={['Form', 'Input']} />
        <Divider />
        <SmallColumn $pad={4} $w={52}>
          <SmallButton><GoogleFormIcon />(?)</SmallButton>
          <SmallButton aria-label="Tambah"><ClipAddIcon /></SmallButton>
        </SmallColumn>
        <Big w={68} icon={<ReportIcon />} lines={['Database', 'Laporan']} />
      </GroupBody>
      <GroupName>Input</GroupName>
    </Group>

    <Group $w={302}>
      <GroupBody>
        <Big w={83} icon={<OutputIcon />} lines={['Output', 'PerPeserta']} />
        <Divider />
        <Big w={64} icon={<RecapClassIcon />} lines={['Rekap', 'Perkelas']} />
        <Big w={64} icon={<ChartIcon />} lines={['Grafik', 'Perkelas']} />
        <Divider />
        <Big w={60} icon={<RecapAllIcon />} lines={['Rekap', 'Semua']} />
        <Divider />
      </GroupBody>
      <GroupName>Output</GroupName>
    </Group>

    <Group $w={103}>
      <GroupBody $pad={3}>
        <MenuAnchor>
          <Big w={94} icon={<IdeaBookIcon />} lines={['Kelengkapan', '']} caret open />
          <KelengkapanMenu />
        </MenuAnchor>
      </GroupBody>
    </Group>

    <Group $w={260}>
      <GroupBody>
        <Big w={66} icon={<PrinterIcon />} lines={['Cetak', 'Printer']} caret />
        <Big w={58} icon={<PdfIcon />} lines={['Buat', 'PDF']} caret />
        <Divider />
        <SmallColumn $pad={4}>
          <SmallButton><PreviewIcon />Pint Preview</SmallButton>
          <SmallButton><PageSetupIcon />Page Setup</SmallButton>
          <SmallButton><ViewIcon />Tampilan <Caret /></SmallButton>
        </SmallColumn>
      </GroupBody>
      <GroupName>Printer dan PDF</GroupName>
    </Group>

    <Group $w={67}>
      <GroupBody>
        <Big w={62} icon={<LockIcon />} lines={['Admin', '']} caret />
      </GroupBody>
    </Group>

    <Group $w={88}>
      <GroupBody>
        <Big w={84} icon={<NetworkIcon />} lines={['Dokumen', 'Eksternal']} caret />
      </GroupBody>
    </Group>

    <Group $w={39}>
      <SmallColumn $pad={5}>
        <SmallButton aria-label="Bantuan"><HelpIcon /></SmallButton>
        <SmallButton aria-label="Informasi"><InfoIcon /></SmallButton>
      </SmallColumn>
    </Group>
  </Ribbon>
)

const LogoSelect = ({ id, label, options }) => (
  <>
    <LogoLabel htmlFor={id}>{label} :</LogoLabel>
    <SelectBox>
      <Select id={id}>
        {options.map((o) => (
          <option key={o}>{o}</option>
        ))}
      </Select>
      <SelectArrow>
        <svg width="14" height="8" viewBox="0 0 14 8"><path d="M0 0h14L7 8z" /></svg>
      </SelectArrow>
    </SelectBox>
  </>
)

const App = () => {
  return (
    <Window>
      <GlobalStyle />

      <TitleBar>
        <QuickAccess>
          <ExcelIcon />
          <QuickLine />
          <QuickLine />
          <PlainButton aria-label="Toolbar">
            <svg width="9" height="9" viewBox="0 0 9 9"><path d="M0 0h9v1.200H0zM1 4h7L4.500 8z" /></svg>
          </PlainButton>
        </QuickAccess>
        <Title>{'O  -  Aplikasi Terdaftar atas nama :  Sekolah Negeri Nusantara  -  www.berkreasi.net'}</Title>
        <WindowButtons>
          <WindowButton aria-label="Minimize">
            <svg width="15" height="15"><path d="M0 7.500h15" stroke="#000" /></svg>
          </WindowButton>
          <WindowButton aria-label="Restore">
            <svg width="15" height="15" fill="none" stroke="#000" strokeWidth="1.400">
              <rect x="1" y="4" width="10" height="10" rx="1.500" />
              <path d="M4 1.500h7c2 0 3 1 3 3v7" />
            </svg>
          </WindowButton>
          <WindowButton aria-label="Close">
            <svg width="15" height="15"><path d="M0 0l15 15M15 0L0 15" stroke="#000" strokeWidth="1.400" /></svg>
          </WindowButton>
        </WindowButtons>
      </TitleBar>

      <TabBar>
        <FileTab>File</FileTab>
        <Tab $active>Home</Tab>
        <Tab>Pengaturan Kertas</Tab>
        <TabTools>
          <PlainButton aria-label="Collapse ribbon">
            <svg width="14" height="12" fill="#fff" stroke="#3c4654" strokeWidth="1.200">
              <path d="M1 8l6-7 6 7v2H9L7 7.500 5 10H1z" />
            </svg>
          </PlainButton>
          <PlainButton aria-label="Help">
            <svg width="24" height="24">
              <circle cx="12" cy="12" r="12" fill="#b4b2b4" />
              <path d="M8.500 9.500c0-5 7-5 7 0 0 3-3.500 3-3.500 6M12 17v3" fill="none" stroke="#fff" strokeWidth="2.600" />
            </svg>
          </PlainButton>
          <PlainButton aria-label="Minimize workbook">
            <svg width="18" height="18"><rect x="1" y="7" width="15" height="6" rx="1" fill="none" stroke="#a9a7ac" strokeWidth="2" /></svg>
          </PlainButton>
          <PlainButton aria-label="Restore workbook">
            <svg width="19" height="18" fill="#fff" stroke="#a9a7ac" strokeWidth="1.800">
              <rect x="7" y="1" width="11" height="10" />
              <path d="M1 6h10v11H1zM4 11h4v3H4z" />
            </svg>
          </PlainButton>
          <PlainButton aria-label="Close workbook">
            <svg width="18" height="16" fill="#fff" stroke="#a9a7ac" strokeWidth="1.600">
              <path d="M1 1h5l3 3 3-3h5v3l-4 4 4 4v3h-5l-3-3-3 3H1v-3l4-4-4-4z" />
            </svg>
          </PlainButton>
        </TabTools>
      </TabBar>

      <RibbonBar />

      <Workspace>
        <Pane>
          <Banner>
            <BannerSide><HomeLogo /></BannerSide>
            <BannerTitle>Cover Poin</BannerTitle>
            <TextEditorButton>Teks<br />Editor</TextEditorButton>
          </Banner>

          <Body>
            <Sidebar>
              <SideTitle>PENGATURAN</SideTitle>
              <Note><b>Catatan :</b></Note>
              <Note>*) Ketik spasi untuk mengkosongkan teks<br />pada kolom kuning.</Note>

              <Fields>
                <label htmlFor="teks-atas">Teks Atas</label>
                <span>:</span>
                <FieldInput id="teks-atas" />
                <label htmlFor="judul">Judul</label>
                <span>:</span>
                <FieldArea id="judul" />
                <label htmlFor="keterangan">Keterangan</label>
                <span>:</span>
                <FieldInput id="keterangan" />
              </Fields>

              <LogoForm>
                <LogoSelect id="logo-a" label="Logo A" options={['Konselor', 'Kosong']} />
                <PlainButton aria-label="Pilih gambar"><PicturesIcon /></PlainButton>
                <LogoSelect id="logo-cadangan" label="Logo Cadangan" options={['Kosong', 'Konselor']} />
              </LogoForm>
              <LogoNote>{'Logo Cadangan  bisa\ndi resize  sesuai\nkebutuhan  dan\nsebagai  alternatif'}</LogoNote>
            </Sidebar>

            <Canvas>
              <Sheet>
                <Spine>
                  <SchoolName>Sekolah Negeri Nusantara</SchoolName>
                  <SchoolLine $start={317}>Jl. Alamat Lengkap no 1 NamaKelurahan NamaKecamatan</SchoolLine>
                  <SchoolLine $start={361}>{'Telp.: 0335 644644  Website: www.website.sch.id'}</SchoolLine>
                </Spine>
                <Cover>
                  <span />
                  <CoverKind>Laporan</CoverKind>
                  <CoverTitle>
                    <h2>HOME VISIT</h2>
                    <p>Bimbingan Konseling (BK)</p>
                  </CoverTitle>
                  <CoverLogo><BkLogo /></CoverLogo>
                </Cover>
              </Sheet>
            </Canvas>
          </Body>

          <HScroll>
            <ArrowButton $w={26} $h={24} aria-label="Scroll left"><Triangle dir="left" /></ArrowButton>
            <HTrack>
              <HThumb>
                <svg width="8" height="8"><path d="M1 0v8M4 0v8M7 0v8" stroke="#70767f" /></svg>
              </HThumb>
            </HTrack>
            <ArrowButton $w={30} $h={24} aria-label="Scroll right"><Triangle dir="right" /></ArrowButton>
            <SplitBox $w={10} $h={23} />
          </HScroll>
        </Pane>

        <VScroll>
          <SplitBox $w={24} $h={12} />
          <ArrowButton $w={24} $h={24} aria-label="Scroll up"><Triangle dir="up" /></ArrowButton>
          <VTrack>
            <VThumb>
              <svg width="8" height="8"><path d="M0 1h8M0 4h8M0 7h8" stroke="#70767f" /></svg>
            </VThumb>
          </VTrack>
          <ArrowButton $w={24} $h={24} aria-label="Scroll down"><Triangle dir="down" /></ArrowButton>
          <Corner />
        </VScroll>
        <Frame />
      </Workspace>

      <StatusBar>
        <StatusText>Ready</StatusText>
        <StatusLine />
        <PlainButton aria-label="Record macro">
          <svg width="42" height="22" viewBox="0 0 42 22">
            <path d="M9 1h22v20H9z" fill="#f4f7fc" stroke="#5871a5" />
            <path d="M9 1h22v5H9z" fill="#3b6fd0" />
            <path d="M11 10h19M11 14h19M11 18h19M16 7v13M21 7v13M26 7v13" stroke="#8ba3cf" />
            <path d="M9 20h22" stroke="#2c4a7c" strokeWidth="2" />
            <circle cx="13" cy="5" r="4.500" fill="#dd5a35" />
          </svg>
        </PlainButton>
        <StatusLine />
        <Spacer />
        <StatusLine />
        <Views>
          <ViewButton $active aria-label="Normal">
            <svg width="20" height="16"><path d="M0 0h20v16H0z" fill="#5b5f66" /><path d="M2 3h4v3H2zM8 3h4v3H8zM14 3h4v3h-4zM2 7h4v3H2zM8 7h4v3H8zM14 7h4v3h-4zM2 11h4v3H2zM8 11h4v3H8zM14 11h4v3h-4z" fill="#fff" /></svg>
          </ViewButton>
          <ViewButton aria-label="Page layout">
            <svg width="21" height="18"><path d="M1 1h19v16H1z" fill="#a2a6ab" stroke="#5b5f66" strokeWidth="2" /><path d="M6 4h9v11H6z" fill="#fff" stroke="#5b5f66" /><path d="M8 7h5M8 9.500h5M8 12h5" stroke="#5b5f66" /></svg>
          </ViewButton>
          <ViewButton aria-label="Page break preview">
            <svg width="21" height="18"><path d="M1 1h19v16H1z" fill="#a2a6ab" stroke="#5b5f66" strokeWidth="2" /><path d="M2 2h5v9H2zM8 2h5v9H8z" fill="#fff" /></svg>
          </ViewButton>
        </Views>
        <ZoomValue>90%</ZoomValue>
        <RoundButton aria-label="Zoom out">
          <svg width="12" height="12"><path d="M1 6h10" stroke="#5b5f66" strokeWidth="3" /></svg>
        </RoundButton>
        <ZoomSlider type="range" min="0" max="200" defaultValue="90" aria-label="Zoom" />
        <RoundButton aria-label="Zoom in">
          <svg width="12" height="12"><path d="M0 6h12M6 0v12" stroke="#5b5f66" strokeWidth="3" /></svg>
        </RoundButton>
      </StatusBar>
    </Window>
  )
}

export default App
